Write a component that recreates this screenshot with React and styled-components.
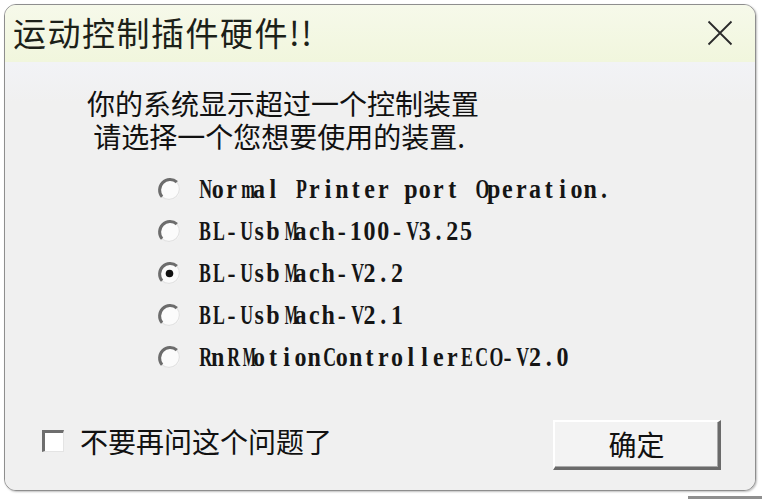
import React, { useState } from "react";
import styled, { createGlobalStyle } from "styled-components";

const Global = createGlobalStyle`
  html, body { margin: 0; padding: 0; background: #ffffff; }
  body { width: 762px; height: 499px; overflow: hidden; }
  * { box-sizing: border-box; }
`;

const CJK = `"Microsoft YaHei", "Noto Sans CJK SC", "Noto Sans", sans-serif`;

const Page = styled.div`
  width: 762px;
  height: 499px;
  padding: 4px 7px 0 4px;
  display: flex;
  flex-direction: column;
`;

const Window = styled.div`
  width: 752px;
  height: 487px;
  border: 1px solid #8e8e8e;
  border-radius: 12px;
  overflow: hidden;
  display: flex;
  flex-direction: column;
  background: #f0f0f0;
  box-shadow: 1px 1px 2px rgba(0, 0, 0, 0.25);
`;

const TitleBar = styled.div`
  height: 57px;
  flex: none;
  display: flex;
  align-items: center;
  justify-content: space-between;
  padding: 0 22px 0 8px;
  background: linear-gradient(#f6f9ea, #f1f6dd);
`;

const Title = styled.div`
  font-family: ${CJK};
  font-size: 33px;
  letter-spacing: 1.5px;
  color: #1c2118;
  line-height: 1;
  margin-top: -2px;
`;

const Close = styled.div`
  width: 26px;
  height: 26px;
  display: flex;
  align-items: center;
  justify-content: center;
  margin-top: -1px;
`;

const Body = styled.div`
  flex: 1;
  display: flex;
  flex-direction: column;
  background: linear-gradient(#f2f3f6, #f0f0f0 40px);
`;

const Message = styled.div`
  margin-top: 25px;
  padding-left: 82px;
  display: flex;
  flex-direction: column;
`;

const Line = styled.div`
  font-family: ${CJK};
  font-size: 28px;
  line-height: 33px;
  height: 33px;
  color: #111;
  white-space: pre;
`;

const Options = styled.div`
  margin-top: 15px;
  padding-left: 152px;
  display: flex;
  flex-direction: column;
`;

const Option = styled.label`
  height: 42px;
  display: flex;
  align-items: center;
  gap: 15px;
  cursor: default;
`;

const MonoText = styled.span`
  display: inline-flex;
  transform: scaleY(1.1);
  transform-origin: center;
`;

const Cell = styled.span`
  display: inline-block;
  width: 13.8px;
  text-align: center;
  font-family: "Liberation Serif", "Times New Roman", serif;
  font-weight: bold;
  font-size: 24px;
  line-height: 1;
  color: #151515;
  white-space: pre;
`;

const Glyph = styled.span`
  display: inline-block;
  transform-origin: center;
`;

const Footer = styled.div`
  margin-top: auto;
  display: flex;
  align-items: center;
  justify-content: space-between;
  padding: 0 34px 20px 37px;
`;

const CheckRow = styled.label`
  display: flex;
  align-items: center;
  gap: 16px;
  margin-top: -8px;
`;

const CheckBox = styled.span`
  flex: none;
  width: 22px;
  height: 22px;
  display: inline-block;
  background: #ffffff;
  border-top: 3px solid #6e6e6e;
  border-left: 3px solid #6e6e6e;
  border-right: 1px solid #e4e4e4;
  border-bottom: 1px solid #e4e4e4;
`;

const CheckText = styled.span`
  font-family: ${CJK};
  font-size: 28px;
  color: #111;
  line-height: 1;
`;

const Button = styled.button`
  width: 168px;
  height: 50px;
  background: #f3f3f3;
  border-top: 2px solid #ffffff;
  border-left: 2px solid #ffffff;
  border-right: 3px solid #6a6a6a;
  border-bottom: 3px solid #6a6a6a;
  box-shadow: inset -1px -1px 0 #a9a9a9;
  font-family: ${CJK};
  font-size: 28px;
  color: #111;
  padding: 0 0 2px 0;
  line-height: 1;
`;

const Shadow = styled.div`
  margin-top: 5px;
  margin-left: auto;
  margin-right: -7px;
  width: 74px;
  height: 3px;
  background: #8f8f8f;
`;

function Radio({ checked }) {
  return (
    <svg width="25" height="25" viewBox="0 0 25 25">
      <circle cx="12.5" cy="12.5" r="10.5" fill="#fbfbfb" />
      <path
        d="M5.1 19.9 A10.5 10.5 0 0 1 19.9 5.1"
        fill="none"
        stroke="#6c6c6c"
        strokeWidth="3"
      />
      <path
        d="M19.9 5.1 A10.5 10.5 0 0 1 5.1 19.9"
        fill="none"
        stroke="#e2e2e2"
        strokeWidth="1.2"
      />
      {checked && <circle cx="12.5" cy="12.5" r="3.8" fill="#111" />}
    </svg>
  );
}

function glyphStyle(ch) {
  if ("MW".includes(ch)) return { transform: "scaleX(0.58)" };
  if ("mw".includes(ch)) return { transform: "scaleX(0.68)" };
  if (/[A-Z]/.test(ch)) return { transform: "scaleX(0.74)" };
  return undefined;
}

function Mono({ text }) {
  return (
    <MonoText>
      {Array.from(text).map((ch, i) => (
        <Cell key={i}>
          <Glyph style={glyphStyle(ch)}>{ch}</Glyph>
        </Cell>
      ))}
    </MonoText>
  );
}

const options = [
  "Normal Printer port Operation.",
  "BL-UsbMach-100-V3.25",
  "BL-UsbMach-V2.2",
  "BL-UsbMach-V2.1",
  "RnRMotionControllerECO-V2.0",
];

export default function App() {
  const [sel, setSel] = useState(2);
  return (
    <>
      <Global />
      <Page>
        <Window>
          <TitleBar>
            <Title>运动控制插件硬件!!</Title>
            <Close>
              <svg width="26" height="26" viewBox="0 0 26 26">
                <path
                  d="M1.5 1.5 L24.5 24.5 M24.5 1.5 L1.5 24.5"
                  stroke="#2a2a2a"
                  strokeWidth="1.8"
                  fill="none"
                />
              </svg>
            </Close>
          </TitleBar>
          <Body>
            <Message>
              <Line>你的系统显示超过一个控制装置</Line>
              <Line>{" 请选择一个您想要使用的装置."}</Line>
            </Message>
            <Options>
              {options.map((o, i) => (
                <Option key={o} onClick={() => setSel(i)}>
                  <Radio checked={sel === i} />
                  <Mono text={o} />
                </Option>
              ))}
            </Options>
            <Footer>
              <CheckRow>
                <CheckBox />
                <CheckText>不要再问这个问题了</CheckText>
              </CheckRow>
              <Button>确定</Button>
            </Footer>
          </Body>
        </Window>
        <Shadow />
      </Page>
    </>
  );
}
